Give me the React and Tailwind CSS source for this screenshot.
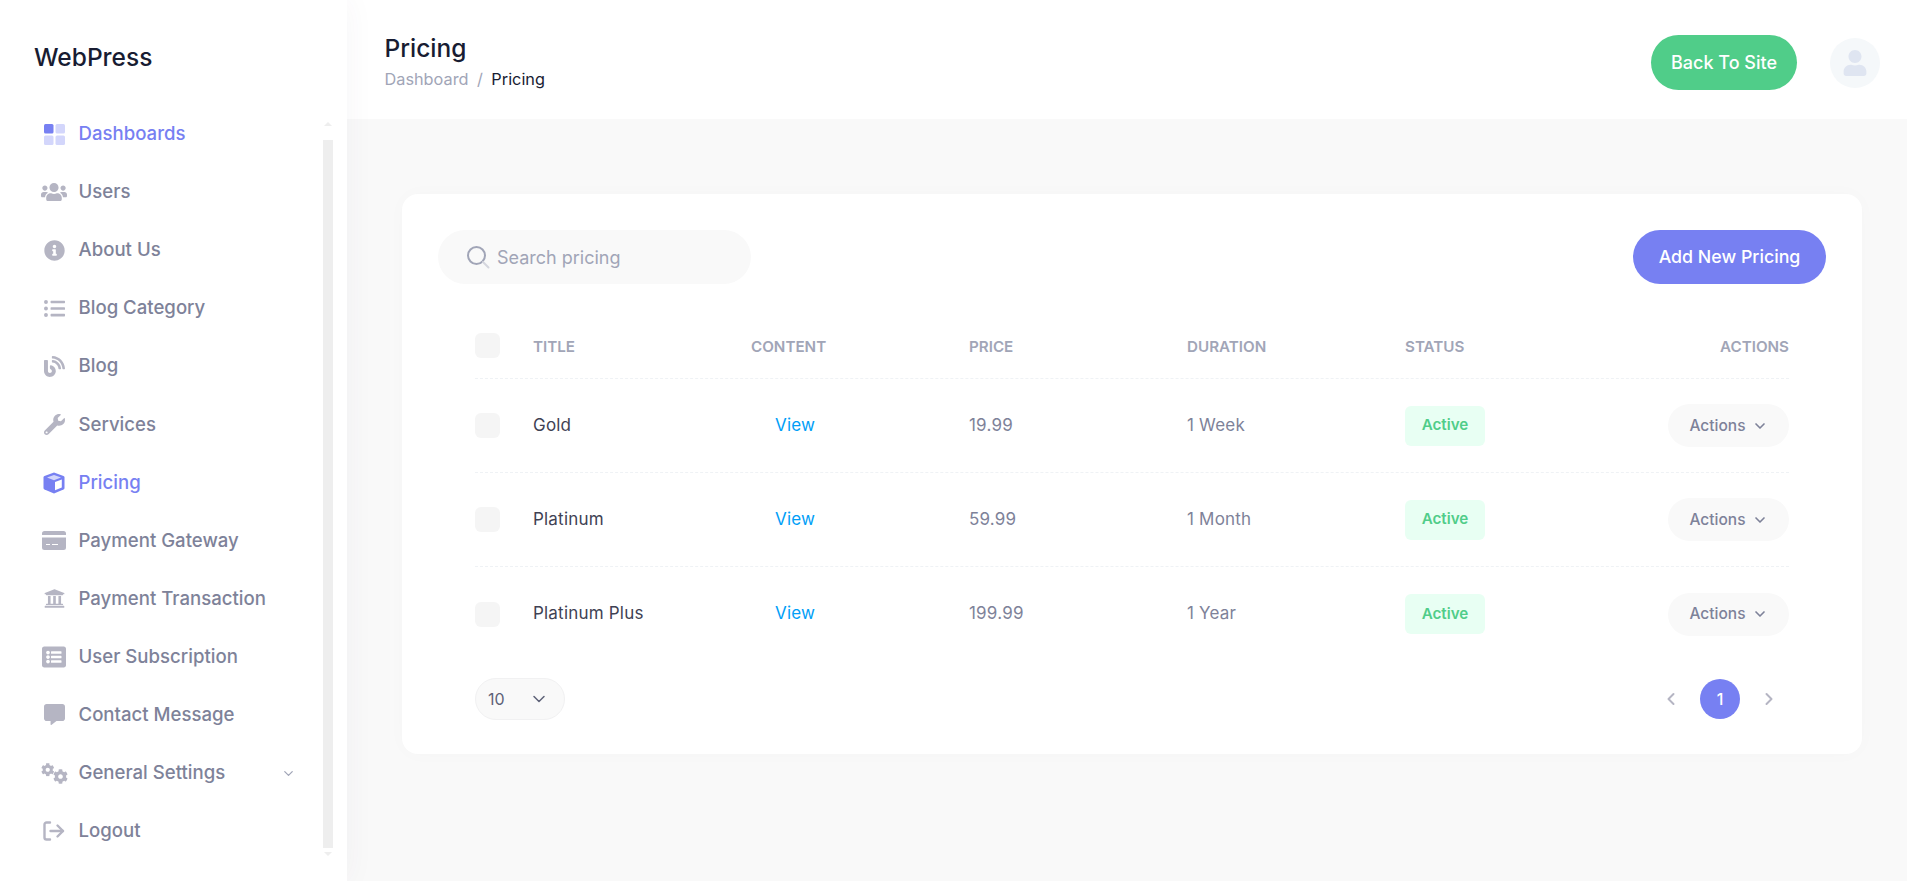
import { ChevronDown, ChevronLeft, ChevronRight } from "lucide-react";
import {
  FaBlog,
  FaCog,
  FaCommentAlt,
  FaInfoCircle,
  FaListAlt,
  FaListUl,
  FaUniversity,
  FaUser,
  FaUsers,
  FaWrench,
} from "react-icons/fa";

const DashboardIcon = () => (
  <svg width="21" height="21" viewBox="0 0 21 21">
    <rect x="0" y="0" width="9.5" height="9.5" rx="1.5" fill="#7780f2" />
    <rect x="11.5" y="0" width="9.5" height="9.5" rx="1.5" fill="#d3d6fb" />
    <rect x="0" y="11.5" width="9.5" height="9.5" rx="1.5" fill="#d3d6fb" />
    <rect x="11.5" y="11.5" width="9.5" height="9.5" rx="1.5" fill="#d3d6fb" />
  </svg>
);

const CubeIcon = () => (
  <svg width="22" height="22" viewBox="0 0 22 22">
    <path d="M11 0.5 L20.5 4 Q21.5 4.4 21.5 5.5 V16 Q21.5 17 20.5 17.5 L11 21.5 L1.5 17.5 Q0.5 17 0.5 16 V5.5 Q0.5 4.4 1.5 4 Z" fill="#7780f2" />
    <path d="M11 3 L18 5.6 L11 8.2 L4 5.6 Z" fill="#d3d6fb" />
    <path d="M12 10 L18.8 7.4 V15.4 L12 18.2 Z" fill="#ffffff" />
  </svg>
);

const CardIcon = () => (
  <svg width="24" height="19" viewBox="0 0 24 19" fill="currentColor">
    <path d="M2.5 0 H21.5 A2.5 2.5 0 0 1 24 2.5 V4 H0 V2.5 A2.5 2.5 0 0 1 2.5 0 Z" />
    <path d="M0 6.5 H24 V16.5 A2.5 2.5 0 0 1 21.5 19 H2.5 A2.5 2.5 0 0 1 0 16.5 Z M4 13 V14 H8 V13 Z M10 13 V14 H16 V13 Z" fillRule="evenodd" />
  </svg>
);

const GearsIcon = () => (
  <svg width="27" height="21" viewBox="0 0 27 21" fill="currentColor">
    <FaCog x="0" y="0" size={13.5} />
    <FaCog x="12" y="6" size={15} />
  </svg>
);

const LogoutIcon = () => (
  <svg width="22" height="20" viewBox="0 0 22 20" fill="none" stroke="currentColor" strokeWidth="2.4" strokeLinecap="round" strokeLinejoin="round">
    <path d="M7 1.5 H3.5 A2 2 0 0 0 1.5 3.5 V16.5 A2 2 0 0 0 3.5 18.5 H7" />
    <path d="M7.5 10 H20" />
    <path d="M14.5 4.5 L20 10 L14.5 15.5" />
  </svg>
);

const SearchIcon = () => (
  <svg width="24" height="24" viewBox="0 0 24 24" fill="none" strokeLinecap="round">
    <circle cx="10.5" cy="10.5" r="8.5" stroke="#a1a5b7" strokeWidth="2" />
    <path d="M17 17 L22.5 22.5" stroke="#d5d6de" strokeWidth="2" />
  </svg>
);

const menu = [
  { label: "Dashboards", icon: <DashboardIcon />, active: true },
  { label: "Users", icon: <FaUsers className="text-[26px]" /> },
  { label: "About Us", icon: <FaInfoCircle className="text-[21px]" /> },
  { label: "Blog Category", icon: <FaListUl className="text-[21px]" /> },
  { label: "Blog", icon: <FaBlog className="text-[21px]" /> },
  { label: "Services", icon: <FaWrench className="text-[21px]" /> },
  { label: "Pricing", icon: <CubeIcon />, active: true },
  { label: "Payment Gateway", icon: <CardIcon /> },
  { label: "Payment Transaction", icon: <FaUniversity className="text-[21px]" /> },
  { label: "User Subscription", icon: <FaListAlt className="text-[24px]" /> },
  { label: "Contact Message", icon: <FaCommentAlt className="text-[21px]" /> },
  { label: "General Settings", icon: <GearsIcon />, arrow: true },
  { label: "Logout", icon: <LogoutIcon /> },
];

const rows = [
  { title: "Gold", price: "19.99", duration: "1 Week" },
  { title: "Platinum", price: "59.99", duration: "1 Month" },
  { title: "Platinum Plus", price: "199.99", duration: "1 Year" },
];

const Sidebar = () => (
  <aside className="w-[347px] shrink-0 h-[881px] bg-white shadow-[0_0_28px_rgba(82,63,105,0.05)] z-10 flex flex-col">
    <div className="h-[105px] pl-[34px] pt-[41px] text-[24.5px] leading-[32px] font-medium text-[#181c32]">
      WebPress
    </div>
    <div className="flex flex-1 pl-[38px] pr-[14px]">
      <nav className="flex-1 pr-[27px]">
        {menu.map((item) => (
          <a
            key={item.label}
            className={`flex items-center h-[58.1px] text-[18.6px] font-medium ${
              item.active ? "text-[#7780f2]" : "text-[#7e8299]"
            }`}
          >
            <span
              className={`w-[32px] flex justify-center mr-[8.5px] ${
                item.active ? "text-[#7780f2]" : "text-[#b5b5c3]"
              }`}
            >
              {item.icon}
            </span>
            <span className="flex-1">{item.label}</span>
            {item.arrow && <ChevronDown size={15} className="text-[#a1a5b7]" />}
          </a>
        ))}
      </nav>
      {/* Scrollbar */}
      <div className="w-[10px] flex flex-col items-center mt-[15px]">
        <div className="h-[20px] w-full flex justify-center pt-[2px]">
          <div className="w-0 h-0 border-x-[4px] border-x-transparent border-b-[4px] border-b-[#eeeeee]" />
        </div>
        <div className="w-full h-[708px] bg-[#eeeeee]" />
        <div className="w-0 h-0 mt-[4px] border-x-[4px] border-x-transparent border-t-[4px] border-t-[#eeeeee]" />
      </div>
    </div>
  </aside>
);

const Header = () => (
  <header className="h-[119px] bg-white flex items-start justify-between pl-[37.5px] pr-[27px] pt-[35px]">
    <div className="-mt-[2px]">
      <h1 className="text-[24.5px] leading-[30px] font-medium text-[#181c32]">Pricing</h1>
      <div className="mt-[6px] text-[16.3px] leading-[20px] flex gap-[8.5px]">
        <span className="text-[#a1a5b7]">Dashboard</span>
        <span className="text-[#a1a5b7]">/</span>
        <span className="text-[#181c32]">Pricing</span>
      </div>
    </div>
    <div className="flex items-center gap-[33px]">
      <button className="w-[146px] h-[55px] rounded-full bg-[#50cd89] text-white text-[18px] font-medium">
        Back To Site
      </button>
      <div className="w-[50px] h-[50px] rounded-full bg-[#f5f8fa] flex items-center justify-center">
        <FaUser className="text-[26px] text-[#dfe5f1]" />
      </div>
    </div>
  </header>
);

const Checkbox = () => <div className="w-[25px] h-[25px] rounded-[6px] bg-[#f5f5f5]" />;

const Row = ({ row, last }) => (
  <div
    className={`grid grid-cols-[58px_218px_218px_218px_218px_218px_1fr] items-center h-[94px] text-[17px] tracking-[0.2px] ${
      last ? "" : "border-b border-dashed border-[#eff2f5]"
    }`}
  >
    <Checkbox />
    <div className="text-[#3f4254]">{row.title}</div>
    <div className="text-[#009ef7] pl-[24px]">View</div>
    <div className="text-[#7e8299]">{row.price}</div>
    <div className="text-[#7e8299]">{row.duration}</div>
    <div>
      <span className="inline-flex items-center justify-center w-[80px] h-[40px] rounded-[6px] bg-[#e8fff3] text-[#50cd89] text-[15.2px] tracking-normal font-semibold">
        Active
      </span>
    </div>
    <div className="flex justify-end">
      <button className="w-[121px] h-[43px] rounded-full bg-[#f9f9f9] text-[#7e8299] text-[15.5px] tracking-normal font-medium flex items-center justify-center gap-[6px]">
        Actions
        <ChevronDown size={16} strokeWidth={2.5} />
      </button>
    </div>
  </div>
);

export default function App() {
  return (
    <div className="flex h-[881px] overflow-hidden bg-[#f9f9f9] font-['Inter',sans-serif]">
      <Sidebar />
      <main className="flex-1 min-w-0">
        <Header />
        <div className="pt-[75px] pl-[55px] pr-[45px]">
          <section className="h-[560px] bg-white rounded-[16px] shadow-[0_0_20px_rgba(76,87,125,0.02)] px-[36px] pt-[36px]">
            <div className="flex items-center justify-between">
              <div className="w-[313px] h-[54px] rounded-full bg-[#f9f9f9] flex items-center pl-[28px] gap-[7px]">
                <SearchIcon />
                <span className="text-[18px] text-[#a1a5b7]">Search pricing</span>
              </div>
              <button className="w-[193px] h-[54px] rounded-full bg-[#7780f2] text-white text-[17.8px] font-medium">
                Add New Pricing
              </button>
            </div>

            <div className="mx-[37px] mt-[49px]">
              <div className="grid grid-cols-[58px_218px_218px_218px_218px_218px_1fr] items-start h-[46px] border-b border-dashed border-[#eff2f5] text-[15.2px] font-semibold text-[#a1a5b7] uppercase">
                <Checkbox />
                <div className="pt-[3px]">Title</div>
                <div className="pt-[3px]">Content</div>
                <div className="pt-[3px]">Price</div>
                <div className="pt-[3px]">Duration</div>
                <div className="pt-[3px]">Status</div>
                <div className="pt-[3px] text-right">Actions</div>
              </div>
              {rows.map((row, i) => (
                <Row key={row.title} row={row} last={i === rows.length - 1} />
              ))}
              <div className="flex items-center justify-between mt-[17px]">
                <div className="w-[90px] h-[42px] rounded-full bg-[#f9f9f9] border border-[#f1f1f2] flex items-center justify-between pl-[12px] pr-[15px] text-[16px] text-[#5e6278]">
                  10
                  <ChevronDown size={20} strokeWidth={1.8} className="text-[#5e6278]" />
                </div>
                <div className="flex items-center gap-[19px] pr-[10px]">
                  <ChevronLeft size={20} strokeWidth={2.4} className="text-[#b5b5c3]" />
                  <div className="w-[40px] h-[40px] rounded-full bg-[#7780f2] text-white text-[16px] font-medium flex items-center justify-center">
                    1
                  </div>
                  <ChevronRight size={20} strokeWidth={2.4} className="text-[#b5b5c3]" />
                </div>
              </div>
            </div>
          </section>
        </div>
      </main>
    </div>
  );
}
